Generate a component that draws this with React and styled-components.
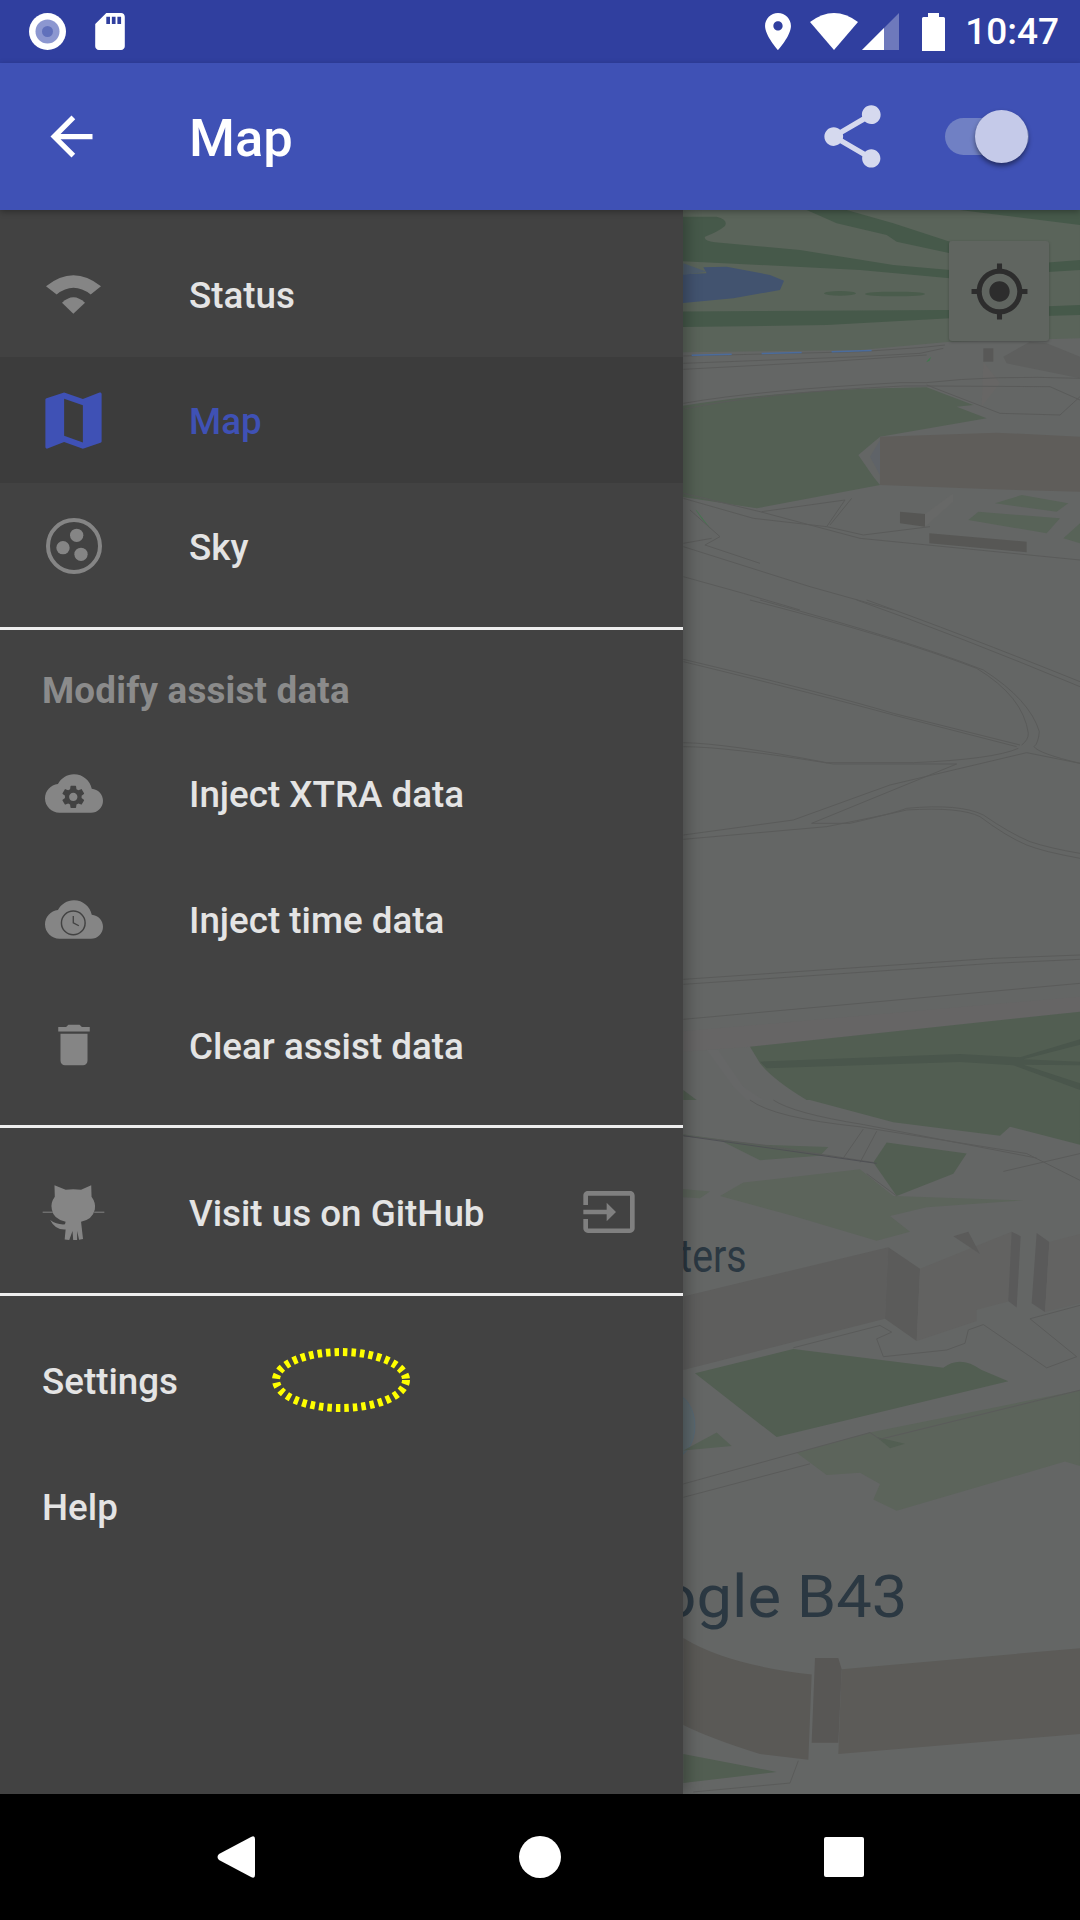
import React from "react";
import styled, { createGlobalStyle } from "styled-components";

const GlobalStyle = createGlobalStyle`
  html, body {
    margin: 0;
    padding: 0;
    background: #000;
    font-family: Roboto, "Noto Sans", sans-serif;
  }
`;

const Page = styled.div`
  width: 1080px;
  height: 1920px;
  display: flex;
  flex-direction: column;
  overflow: hidden;
`;

//Status bar
const StatusBar = styled.div`
  height: 63px;
  flex-shrink: 0;
  background: #303f9f;
  display: flex;
  align-items: center;
  justify-content: space-between;
  padding: 0 21px 0 29px;
`;

const StatusGroup = styled.div`
  display: flex;
  align-items: center;
  gap: ${props => props.gap}px;
`;

const Clock = styled.span`
  color: #fff;
  font-size: 37px;
  font-weight: 500;
  line-height: 63px;
  margin-left: 20px;
`;

//App bar
const AppBar = styled.header`
  position: relative;
  z-index: 2;
  height: 147px;
  flex-shrink: 0;
  background: #3f51b5;
  display: flex;
  align-items: center;
  padding: 0 40px;
  box-shadow: 0 2px 6px rgba(0, 0, 0, 0.3);
`;

const Title = styled.h1`
  margin: 2px 0 0 86px;
  flex: 1;
  color: #fff;
  font-size: 52.5px;
  font-weight: 500;
`;

const Toggle = styled.div`
  position: relative;
  width: 84px;
  height: 37px;
  margin: 0 11px 0 55px;
  border-radius: 19px;
  background: #7080c4;
`;

const Thumb = styled.div`
  position: absolute;
  top: -8px;
  right: 1px;
  width: 53px;
  height: 53px;
  border-radius: 50%;
  background: #c5cae9;
  box-shadow: 0 3px 5px rgba(0, 0, 0, 0.45);
`;

//Drawer
const Body = styled.div`
  position: relative;
  flex: 1;
  display: flex;
  min-height: 0;
`;

const Drawer = styled.nav`
  position: relative;
  z-index: 1;
  width: 683px;
  flex-shrink: 0;
  background: #424242;
  box-shadow: 4px 0 14px rgba(0, 0, 0, 0.28);
`;

const Section = styled.div`
  padding: 21px 0 ${props => props.bottom || 18}px;
  border-bottom: ${props => (props.last ? "none" : "3px solid #eee")};
`;

const SectionLabel = styled.div`
  height: 79px;
  padding-left: 42px;
  display: flex;
  align-items: center;
  color: #8b8b8b;
  font-size: 36.75px;
  font-weight: 700;
  letter-spacing: 0.2px;
`;

const Row = styled.div`
  height: 126px;
  display: flex;
  align-items: center;
  padding-left: 42px;
  background: ${props => (props.active ? "#3c3c3c" : "transparent")};
  color: ${props => (props.active ? "#3f51b5" : "#e4e4e4")};
  font-size: 36.75px;
  font-weight: 500;
`;

const RowText = styled.span`
  padding-top: 2px;
`;

const IconSlot = styled.span`
  width: 63px;
  margin-right: 84px;
  flex-shrink: 0;
  display: flex;
  justify-content: center;
  align-items: center;
`;

const RowEnd = styled.span`
  position: absolute;
  left: 583px;
  display: flex;
`;

const TapMark = styled.svg`
  position: absolute;
  left: 272px;
  top: 1138px;
`;

const MapPane = styled.div`
  position: relative;
  flex: 1;
  overflow: hidden;
  background: #656766;
`;

const MapArt = styled.svg`
  display: block;
  width: 397px;
  height: 1584px;
`;

const LocateButton = styled.div`
  position: absolute;
  left: 266px;
  top: 31px;
  width: 100px;
  height: 100px;
  border-radius: 3px;
  background: #606560;
  box-shadow: 0 1px 3px rgba(0, 0, 0, 0.25);
  display: flex;
  align-items: center;
  justify-content: center;
`;

//Nav bar
const NavBar = styled.div`
  height: 126px;
  flex-shrink: 0;
  background: #000;
  display: flex;
  align-items: center;
  justify-content: space-between;
  padding: 0 216px 0 217px;
`;

const NavCircle = styled.div`
  width: 42px;
  height: 42px;
  border-radius: 50%;
  background: #fff;
`;

const NavSquare = styled.div`
  width: 40px;
  height: 40px;
  border-radius: 2px;
  background: #fff;
`;

const CLOUD =
  "M19.35 10.04C18.67 6.59 15.64 4 12 4 9.11 4 6.6 5.64 5.35 8.04 2.34 8.36 0 10.91 0 14c0 3.31 2.69 6 6 6h13c2.76 0 5-2.24 5-5 0-2.64-2.05-4.78-4.65-4.96z";
const GEAR =
  "M19.14 12.94c.04-.3.06-.61.06-.94 0-.32-.02-.64-.07-.94l2.03-1.58c.18-.14.23-.41.12-.61l-1.92-3.32c-.12-.22-.37-.29-.59-.22l-2.39.96c-.5-.38-1.03-.7-1.62-.94l-.36-2.54c-.04-.24-.24-.41-.48-.41h-3.84c-.24 0-.43.17-.47.41l-.36 2.54c-.59.24-1.13.57-1.62.94l-2.39-.96c-.22-.08-.47 0-.59.22L2.74 8.87c-.12.21-.08.47.12.61l2.03 1.58c-.05.3-.09.63-.09.94s.02.64.07.94l-2.03 1.58c-.18.14-.23.41-.12.61l1.92 3.32c.12.22.37.29.59.22l2.39-.96c.5.38 1.03.7 1.62.94l.36 2.54c.05.24.24.41.48.41h3.84c.24 0 .44-.17.47-.41l.36-2.54c.59-.24 1.13-.56 1.62-.94l2.39.96c.22.08.47 0 .59-.22l1.92-3.32c.12-.22.07-.47-.12-.61l-2.01-1.58zM12 15.6c-1.98 0-3.6-1.62-3.6-3.6s1.62-3.6 3.6-3.6 3.6 1.62 3.6 3.6-1.62 3.6-3.6 3.6z";

const Icon = ({ size, d, color }) => (
  <svg width={size} height={size} viewBox="0 0 24 24" fill={color} style={{ flexShrink: 0 }}>
    <path d={d} />
  </svg>
);

const GREY = "#858585";

const WifiFan = () => (
  <svg width="55" height="39" viewBox="138 162 165 116" fill={GREY}>
    <path d="M138 195 Q220 129 303 195 L272 220 Q220 180 170 220 Z" />
    <path d="M186 245 Q220 212 255 245 L220 278 Z" />
  </svg>
);

const SkyDial = () => (
  <svg width="56" height="56" viewBox="136 893 168 168" fill={GREY}>
    <circle cx="220" cy="977" r="78" fill="none" stroke={GREY} strokeWidth="12" />
    <circle cx="228" cy="945" r="20" />
    <circle cx="187" cy="982" r="20" />
    <circle cx="241" cy="1002" r="20" />
  </svg>
);

const CloudGear = () => (
  <svg width="58" height="39" viewBox="0 4 24 16">
    <path d={CLOUD} fill={GREY} />
    <g transform="translate(11.7 13.4) scale(.48) translate(-12 -12)">
      <path d={GEAR} fill="#424242" />
    </g>
  </svg>
);

const CloudClock = () => (
  <svg width="58" height="39" viewBox="0 4 24 16">
    <path d={CLOUD} fill={GREY} />
    <circle cx="11.7" cy="13.4" r="4.9" fill="none" stroke="#424242" strokeWidth=".6" />
    <path d="M11.7 10.6 V13.4 L14 14.6" fill="none" stroke="#424242" strokeWidth=".55" />
  </svg>
);

const Octocat = () => (
  <svg width="64" height="57" viewBox="125 1328 192 172" fill={GREY}>
    <path d="M163 1331 L197 1345 Q220 1341 244 1345 L275 1331 L276 1366 Q290 1385 286 1405 Q279 1436 244 1442 L250 1495 L238 1497 L232 1470 L232 1498 L220 1498 L218 1470 L208 1498 L194 1496 L197 1466 Q165 1468 150 1437 Q170 1452 195 1450 L197 1442 Q160 1435 155 1405 Q150 1385 164 1366 Z" />
    <path d="M127 1413 H158 M284 1413 H315" stroke={GREY} strokeWidth="3" />
  </svg>
);

const Thin = styled.g`
  fill: none;
  stroke: ${props => props.color || "#5a5b5a"};
  path, line {
    vector-effect: non-scaling-stroke;
    stroke-width: ${props => props.weight || 1}px;
  }
`;

const MapDrawing = () => (
  <MapArt viewBox="683 210 397 1584">
    <rect x="683" y="210" width="397" height="1584" fill="#646665" />

    <g transform="translate(660 210) scale(.33333)">
      <path d="M0 0 H1260 V385 L870 395 L600 420 L0 428 Z" fill="#5a645a" />
      <path d="M0 20 H170 Q205 28 195 48 Q175 65 135 80 Q130 92 165 97 L420 120 L700 165 L870 180 L1260 150 V180 L870 205 L600 180 L300 165 L0 150 Z" fill="#46594a" />
      <path d="M440 0 H560 L700 40 L870 95 V130 L710 95 L680 75 L530 40 Z" fill="#46594a" />
      <path d="M900 0 H1260 V45 Z" fill="#46594a" />
      <path d="M0 305 L870 300 L1260 285 V315 L870 325 L500 345 L0 352 Z" fill="#46594a" />
      <path d="M0 195 L140 190 L130 172 L200 170 L330 195 L372 212 L360 240 L220 265 L0 285 Z" fill="#42536f" />
      <path d="M70 160 L140 185 L70 195 Z" fill="#4d5c6c" />
      <ellipse cx="540" cy="250" rx="48" ry="7" fill="#4a5c4c" />
      <ellipse cx="705" cy="252" rx="90" ry="7" fill="#4a5c4c" />
      <path d="M0 600 Q300 540 800 532 L940 585 L890 590 L980 625 L660 680 L595 735 L640 800 L660 825 L290 895 L0 850 Z" fill="#546054" />
      <path d="M660 680 L1010 668 L1260 680 V845 L1000 838 L660 825 Z" fill="#5f5d5a" />
      <path d="M660 690 L630 740 L660 795 Z" fill="#5f6368" />
      <path d="M970 415 H1000 V455 H970 Z" fill="#585857" />
      <path d="M970 455 L1020 520 L965 590 Z" fill="#676665" />
      <path d="M1110 395 L1160 400 L1260 440 V505 L1040 460 L1030 440 Z" fill="#5e5f5e" />
      <path d="M720 905 L795 912 V950 L720 940 Z" fill="#565654" />
      <path d="M795 912 L880 850 V875 L795 950 Z" fill="#676867" />
      <path d="M808 970 L1100 995 V1027 L808 1000 Z" fill="#575755" />
      <path d="M1005 880 L1085 855 L1225 880 L1190 905 Z" fill="#586358" />
      <path d="M925 930 L955 905 L1200 925 L1160 970 Z" fill="#586358" />
      <path d="M1210 985 L1260 940 V1000 Z" fill="#586358" />
      <path d="M108 900 L150 955 L125 925 Z" fill="#3f7a4b" stroke="#3f7a4b" />
      <path d="M800 455 L812 442 L808 452 Z" fill="#3f7a4b" stroke="#3f7a4b" />
      <Thin>
        <path d="M70 438 L600 425 L790 412 L855 405" />
        <path d="M70 460 L600 440 L780 430 L850 415" />
        <path d="M70 478 L500 455 L800 435" />
        <path d="M70 580 Q300 540 720 518 L800 518 Q1000 495 1260 505" />
        <path d="M70 598 Q300 548 730 528 L800 528 L1170 530 L1260 570" />
        <path d="M800 525 L1020 610 L1200 615 L1260 560" />
        <path d="M70 850 L300 905 L600 985 L1260 1050" />
        <path d="M70 865 L280 925 L500 950 L555 870 L305 905" />
        <path d="M500 950 L610 975 L810 950 M575 865 L510 945" />
        <path d="M70 1010 L450 1130 L700 1200" />
        <path d="M70 1100 L250 1150 L420 1200" />
        <path d="M90 900 L180 980 L135 1005 L300 1060 M70 1000 L155 985" />
      </Thin>
      <Thin color="#4b6c9c" weight={1.5}>
        <path d="M95 436 L665 421" strokeDasharray="40 30" />
      </Thin>
    </g>

    <g transform="translate(660 600) scale(.33333)">
      <path d="M0 1300 L1260 1190 V1235 L270 1340 L0 1360 Z" fill="#666565" />
      <path d="M270 1340 L1260 1235 V1500 H440 Q340 1440 300 1390 Z" fill="#525e52" />
      <path d="M300 1385 L900 1362 L1080 1372 L1260 1318 V1334 L1090 1378 L1260 1385 V1396 L1090 1394 L1260 1450 V1470 L1060 1396 L900 1386 L320 1405 Z" fill="#4a564c" />
      <path d="M140 1350 H175 L250 1460 L310 1500 H260 L220 1460 Z" fill="#666767" />
      <path d="M70 1470 L110 1500 H70 Z" fill="#525e52" />
      <Thin>
        <path d="M270 0 Q700 110 950 205 Q1090 290 1105 400 Q1105 420 1085 435" />
        <path d="M300 0 Q740 120 970 210 Q1110 300 1138 395 Q1135 430 1122 440 Q1135 460 1260 490" />
        <path d="M590 0 Q900 110 1260 260 M620 0 Q900 100 1260 245" />
        <path d="M70 178 Q500 280 700 340 L1080 435 M70 185 Q500 290 700 345 L1070 440" />
        <path d="M70 428 Q200 430 500 488 H760 Q1000 478 1075 445" />
        <path d="M70 440 Q200 440 520 492 H890 L455 670" />
        <path d="M70 705 L400 660 L690 555 L1100 458 L1260 490" />
        <path d="M70 718 L500 680 Q700 640 740 630 Q900 620 960 650 Q1040 710 1100 735 Q1150 755 1260 775" />
        <path d="M455 670 L570 670 Q700 640 740 625 Q900 610 970 645 Q1050 700 1110 725 Q1170 745 1260 760" />
        <path d="M70 1138 L1000 1075 L1260 1065 M70 1153 L1000 1090 L1260 1078" />
        <path d="M70 1258 L1260 1150" />
      </Thin>
    </g>

    <g transform="translate(660 1100) scale(.33333 .44643)">
      <path d="M450 0 H1260 V100 L1050 60 L1020 80 L700 50 Z" fill="#525e52" />
      <path d="M0 70 L300 100 L505 105 L480 125 L300 135 L180 90 Z" fill="#566156" />
      <path d="M640 140 L680 95 L920 120 L880 165 L710 215 Z" fill="#525e52" />
      <path d="M180 215 L250 185 L600 155 L700 215 L1090 225 L800 240 L690 260 L750 295 L650 315 L400 260 Z" fill="#5c645b" />
      <path d="M0 195 L150 205 L120 220 L0 215 Z" fill="#5c645b" />
      <path d="M70 440 L685 330 L675 490 L70 605 Z" fill="#5e5e5d" />
      <path d="M685 330 L780 378 L770 540 L675 490 Z" fill="#5b5b5a" />
      <path d="M780 378 L1055 295 L1050 450 L950 470 V495 L770 540 Z" fill="#626261" />
      <path d="M880 305 L925 295 L960 345 Z" fill="#5b5b5a" />
      <path d="M1055 295 L1082 305 L1070 465 L1045 450 Z" fill="#5a5a5a" />
      <path d="M1130 298 L1168 318 L1155 475 L1115 455 Z" fill="#5a5a5a" />
      <path d="M1168 318 L1260 300 V455 L1155 475 Z" fill="#636362" />
      <path d="M105 612 L400 558 L850 600 Q900 570 965 605 L1045 630 L350 755 Z" fill="#525e52" />
      <ellipse cx="30" cy="730" rx="75" ry="75" fill="#5c686c" stroke="#486a88" />
      <path d="M70 785 L170 745 L215 775 Z" fill="#566156" />
      <path d="M410 790 L630 745 L1260 650 V820 L1215 810 L710 920 L640 895 L660 860 L600 835 L500 840 Z" fill="#5c645b" />
      <path d="M650 755 L735 770 L690 780 Z" fill="#525e52" />
      <path d="M70 1205 Q200 1265 455 1287 L445 1478 L300 1465 Q150 1430 70 1400 Z" fill="#5a5956" />
      <path d="M465 1250 H535 L545 1275 L535 1440 H455 Z" fill="#585755" />
      <path d="M545 1275 L1260 1228 V1420 L535 1465 Z" fill="#5c5b58" />
      <path d="M70 1465 L350 1505 L70 1530 Z" fill="#525e52" />
      <Thin>
        <path d="M270 0 Q340 40 600 60 L1100 120 L1260 180" />
        <path d="M340 0 Q400 30 610 55 L1130 130" />
        <path d="M70 80 L300 100 L640 140" />
        <path d="M610 65 L550 130 M650 70 L600 140" />
        <path d="M1030 160 L1260 120 M620 165 L710 215" />
        <path d="M400 555 L660 505 L695 520 L650 535 L670 575 L860 560 L915 545 L925 515 L970 503 L1160 600 L1250 575 L1110 490 L1260 460" />
        <path d="M70 860 L630 745 L660 760 L1260 650" />
        <path d="M70 890 L450 815" />
        <path d="M415 1480 L390 1530 L100 1550" />
      </Thin>
      <Thin color="#4f5054">
        <path d="M70 80 L650 142" />
      </Thin>
      <g fontFamily="Roboto, sans-serif" fill="#2b3842">
        <text fontSize="118" textAnchor="end" transform="translate(260 385) scale(1 .87)">ters</text>
        <text fontSize="190" textAnchor="end" transform="translate(742 1158) scale(1 .707)">Google B43</text>
      </g>
    </g>
  </MapArt>
);

const App = () => {
  return (
    <Page>
      <GlobalStyle />
      <StatusBar>
        <StatusGroup gap={29}>
          <svg width="37" height="37" viewBox="0 0 37 37">
            <circle cx="18.5" cy="18.5" r="18.5" fill="#fff" />
            <circle cx="18.5" cy="18.5" r="12" fill="#8c97d0" />
            <circle cx="18.5" cy="18.5" r="5.5" fill="#6070bb" />
          </svg>
          <svg width="30" height="37" viewBox="4 2 16 20" fill="#fff">
            <path d="M18 2h-8L4.02 8 4 20c0 1.1.9 2 2 2h12c1.1 0 2-.9 2-2V4c0-1.1-.9-2-2-2zm-6 6h-2V4h2v4zm3 0h-2V4h2v4zm3 0h-2V4h2v4z" />
          </svg>
        </StatusGroup>
        <StatusGroup gap={0}>
          <svg width="26" height="37" viewBox="5 2 14 20" fill="#fff" style={{ marginRight: 19 }}>
            <path d="M12 2C8.13 2 5 5.13 5 9c0 5.25 7 13 7 13s7-7.75 7-13c0-3.87-3.13-7-7-7zm0 9.5c-1.38 0-2.5-1.12-2.5-2.5s1.12-2.5 2.5-2.5 2.5 1.12 2.5 2.5-1.12 2.5-2.5 2.5z" />
          </svg>
          <svg width="48" height="37" viewBox="0 0 48 37" fill="#fff" style={{ marginRight: 4 }}>
            <path d="M0 9 Q24 -9 48 9 L24 37 Z" />
          </svg>
          <svg width="37" height="37" viewBox="0 0 37 37" style={{ marginRight: 23 }}>
            <path d="M0 37 L37 0 V37 Z" fill="#fff" fillOpacity=".3" />
            <path d="M0 37 L22 15 V37 Z" fill="#fff" />
          </svg>
          <svg width="23" height="38" viewBox="0 0 23 38" fill="#fff">
            <path d="M6 0 H17 V4 H21.5 Q23 4 23 5.5 V38 H0 V5.5 Q0 4 1.5 4 H6 Z" />
          </svg>
          <Clock>10:47</Clock>
        </StatusGroup>
      </StatusBar>

      <AppBar>
        <Icon size={63} color="#fff" d="M20 11H7.83l5.59-5.59L12 4l-8 8 8 8 1.41-1.41L7.83 13H20v-2z" />
        <Title>Map</Title>
        <Icon
          size={75}
          color="#d5d9ee"
          d="M18 16.08c-.76 0-1.44.3-1.96.77L8.91 12.7c.05-.23.09-.46.09-.7s-.04-.47-.09-.7l7.05-4.11c.54.5 1.25.81 2.04.81 1.66 0 3-1.34 3-3s-1.34-3-3-3-3 1.34-3 3c0 .24.04.47.09.7L8.04 9.81C7.5 9.31 6.79 9 6 9c-1.66 0-3 1.34-3 3s1.34 3 3 3c.79 0 1.5-.31 2.04-.81l7.12 4.16c-.05.21-.08.43-.08.65 0 1.61 1.31 2.92 2.92 2.92 1.61 0 2.92-1.31 2.92-2.92s-1.31-2.92-2.92-2.92z"
        />
        <Toggle>
          <Thumb />
        </Toggle>
      </AppBar>

      <Body>
        <Drawer>
          <Section>
            <Row>
              <IconSlot><WifiFan /></IconSlot>
              <RowText>Status</RowText>
            </Row>
            <Row active>
              <IconSlot>
                <Icon
                  size={75}
                  color="#3f51b5"
                  d="M20.5 3l-.16.03L15 5.1 9 3 3.36 4.9c-.21.07-.36.25-.36.48V20.5c0 .28.22.5.5.5l.16-.03L9 18.9l6 2.1 5.64-1.9c.21-.07.36-.25.36-.48V3.5c0-.28-.22-.5-.5-.5zM15 19l-6-2.11V5l6 2.11V19z"
                />
              </IconSlot>
              <RowText>Map</RowText>
            </Row>
            <Row>
              <IconSlot><SkyDial /></IconSlot>
              <RowText>Sky</RowText>
            </Row>
          </Section>
          <Section bottom={17}>
            <SectionLabel>Modify assist data</SectionLabel>
            <Row>
              <IconSlot><CloudGear /></IconSlot>
              <RowText>Inject XTRA data</RowText>
            </Row>
            <Row>
              <IconSlot><CloudClock /></IconSlot>
              <RowText>Inject time data</RowText>
            </Row>
            <Row>
              <IconSlot>
                <Icon size={54} color={GREY} d="M6 19c0 1.1.9 2 2 2h8c1.1 0 2-.9 2-2V7H6v12zM19 4h-3.5l-1-1h-5l-1 1H5v2h14V4z" />
              </IconSlot>
              <RowText>Clear assist data</RowText>
            </Row>
          </Section>
          <Section>
            <Row>
              <IconSlot><Octocat /></IconSlot>
              <RowText>Visit us on GitHub</RowText>
              <RowEnd>
                <svg width="52" height="42" viewBox="1 3 22 18" fill="#808080">
                  <path d="M21 3.01H3c-1.1 0-2 .9-2 2V9h2V4.99h18v14.03H3V15H1v4.01c0 1.1.9 1.98 2 1.98h18c1.1 0 2-.88 2-1.98v-14c0-1.11-.9-2-2-2zM11 16l4-4-4-4v3H1v2h10v3z" />
                </svg>
              </RowEnd>
            </Row>
          </Section>
          <Section last>
            <Row><RowText>Settings</RowText></Row>
            <Row><RowText>Help</RowText></Row>
          </Section>
          <TapMark width="138" height="64" viewBox="0 0 138 64">
            <ellipse cx="69" cy="32" rx="65" ry="28" fill="none" stroke="#ffff00" strokeWidth="8" strokeDasharray="4.5 4" />
          </TapMark>
        </Drawer>

        <MapPane>
          <MapDrawing />
          <LocateButton>
            <Icon
              size={61}
              color="#2d2d2d"
              d="M12 8c-2.21 0-4 1.79-4 4s1.79 4 4 4 4-1.79 4-4-1.79-4-4-4zm8.94 3c-.46-4.17-3.77-7.48-7.94-7.94V1h-2v2.06C6.83 3.52 3.52 6.83 3.06 11H1v2h2.06c.46 4.17 3.77 7.48 7.94 7.94V23h2v-2.06c4.17-.46 7.48-3.77 7.94-7.94H23v-2h-2.06zM12 19c-3.87 0-7-3.13-7-7s3.13-7 7-7 7 3.13 7 7-3.13 7-7 7z"
            />
          </LocateButton>
        </MapPane>
      </Body>

      <NavBar>
        <svg width="38" height="42" viewBox="0 0 38 42" fill="#fff">
          <path d="M34 1 Q38 -1 38 3 V39 Q38 43 34 41 L2 24 Q-1 21 2 18 Z" />
        </svg>
        <NavCircle />
        <NavSquare />
      </NavBar>
    </Page>
  );
};

export default App;
